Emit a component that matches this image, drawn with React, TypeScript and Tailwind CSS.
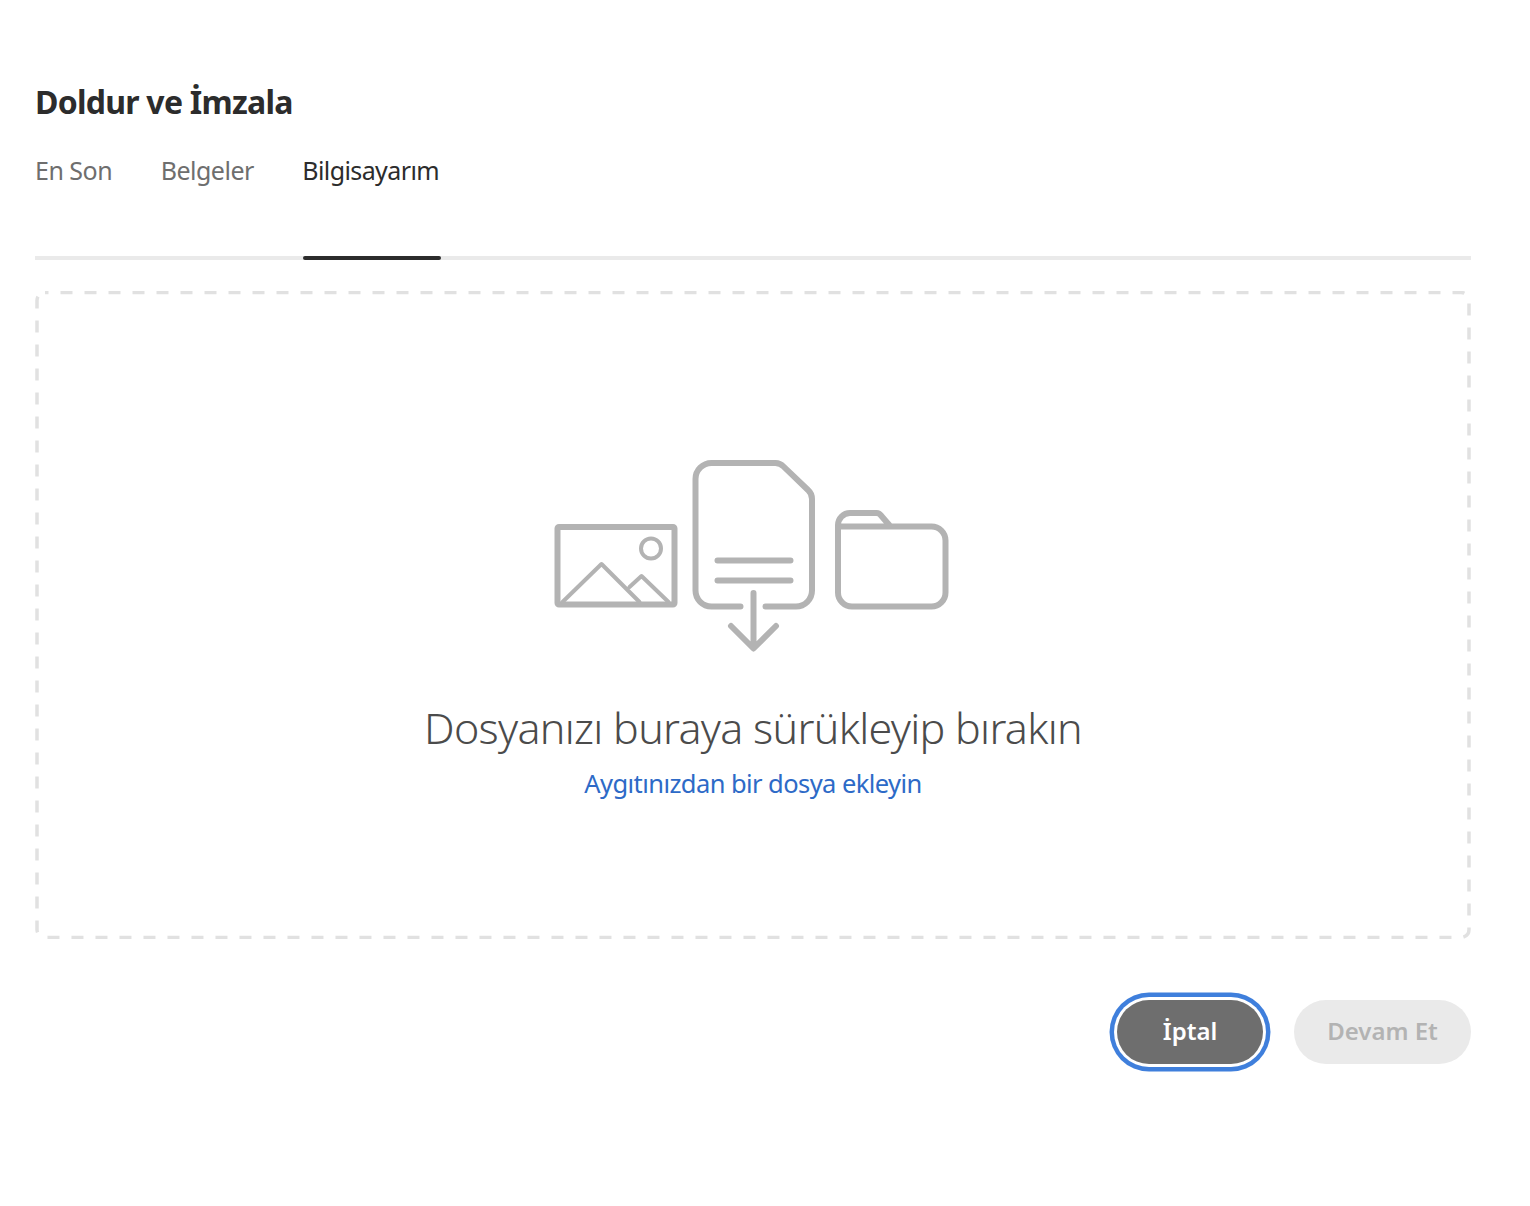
const font = "font-['Noto_Sans','Open_Sans',sans-serif]";

function UploadArt() {
  return (
    <svg viewBox="550.5 455 406 205" className="h-[205px] w-[406px] text-[#b3b3b3]" fill="none" stroke="currentColor" strokeLinecap="round" strokeLinejoin="round">
      {/* picture */}
      <rect x="558" y="528" width="117" height="77.5" rx="1.5" strokeWidth="6" />
      <circle cx="651.5" cy="549.5" r="10" strokeWidth="4" />
      <path d="M563 603 L602 565 L640 603 M630 588 L642 577 L669 603" strokeWidth="4" />
      {/* document */}
      <path d="M741 607.5 H712 a16 16 0 0 1 -16 -16 V480 a16 16 0 0 1 16 -16 H776 a12 12 0 0 1 8 3.5 L808.5 491 a12 12 0 0 1 4 9 V591.5 a16 16 0 0 1 -16 16 H766" strokeWidth="6" />
      <path d="M718 561.5 H791 M718 581.5 H791" strokeWidth="6" />
      <path d="M754 594 V649 M731.5 627 L754 649.5 L776.5 627" strokeWidth="6" />
      {/* folder */}
      <path d="M838.5 527.5 V526 a12 12 0 0 1 12 -12 H877 a6 6 0 0 1 4.5 2.5 L891 527.5 H932 a14 14 0 0 1 14 14 V593.5 a14 14 0 0 1 -14 14 H852.5 a14 14 0 0 1 -14 -14 Z M838.5 527.5 H891" strokeWidth="6" />
    </svg>
  );
}

export default function App() {
  return (
    <div className={`h-[1206px] w-[1530px] bg-white pt-[80px] pl-[35px] ${font}`}>
      <div className="w-[1436px]">
        <h1 className="text-[32px] leading-[44px] font-bold tracking-[-0.75px] text-[#2c2c2c]">Doldur ve İmzala</h1>

        <div className="relative mt-[21px] h-[115px] border-b-[4px] border-[#eaeaea]">
          <div className="flex gap-[48.5px] text-[25px] leading-[50px] tracking-[-0.5px] text-[#6e6e6e]">
            <span>En Son</span>
            <span>Belgeler</span>
            <span className="tracking-[-0.6px] text-[#2c2c2c]">Bilgisayarım</span>
          </div>
          <div className="absolute -bottom-[4px] left-[268px] h-[4px] w-[138px] rounded-sm bg-[#2c2c2c]" />
        </div>

        <div className="relative mt-[31px] flex h-[648px] flex-col items-center pt-[163px]">
          <svg className="absolute inset-0 h-full w-full" fill="none">
            <rect x="2" y="1.5" width="1432" height="645" rx="8" stroke="#e1e1e1" strokeWidth="3.5" strokeDasharray="12 12" strokeDashoffset="8.5" />
          </svg>
          <UploadArt />
          <p className="mt-[39px] text-[43px] leading-[60px] font-light tracking-[-0.7px] text-[#4b4b4b]">Dosyanızı buraya sürükleyip bırakın</p>
          <a className="mt-[7px] text-[25.5px] leading-[36px] tracking-[-0.57px] text-[#2d6ac7]">Aygıtınızdan bir dosya ekleyin</a>
        </div>

        <div className="mt-[61px] flex justify-end gap-[31px]">
          <button className="h-[64px] w-[146px] rounded-full bg-[#6e6e6e] pb-[3px] text-[24px] font-semibold text-white shadow-[0_0_0_3px_#fff,0_0_0_7.5px_#3f7fdc]">İptal</button>
          <button className="h-[64px] w-[177px] rounded-full bg-[#eaeaea] pb-[3px] text-[24px] font-semibold text-[#b3b3b3]">Devam Et</button>
        </div>
      </div>
    </div>
  );
}
